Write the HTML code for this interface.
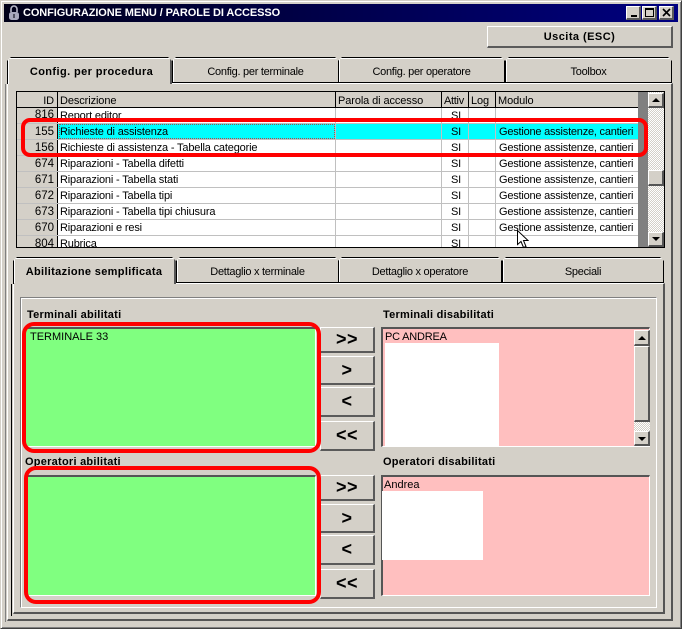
<!DOCTYPE html>
<html><head><meta charset="utf-8"><style>
html,body{margin:0;padding:0}
body{width:682px;height:629px;overflow:hidden;background:#d4d0c8;position:relative;font-family:"Liberation Sans",sans-serif;font-size:11px;color:#000}
div{position:absolute;box-sizing:border-box}
.btn{background:#d4d0c8;border-top:1px solid #fff;border-left:1px solid #fff;border-right:2px solid #5a5a5a;border-bottom:2px solid #5a5a5a}
.tab{background:#d4d0c8;border:1px solid #000;box-shadow:inset 1px 1px #fff;text-align:center;line-height:28px;height:26px;top:57px;letter-spacing:-.28px;clip-path:polygon(4px 0,calc(100% - 4px) 0,100% 4px,100% 100%,0 100%,0 4px)}
.sel{font-weight:bold;border-right:2px solid #555;border-bottom:0;z-index:3;height:27px;letter-spacing:.4px;padding-left:5px}
.t2{top:257px}
.t2.sel{letter-spacing:.33px;padding-left:0}
.r{left:0;height:16px;width:622px;overflow:hidden;line-height:16px;white-space:nowrap;border-bottom:1px solid #c0c0c0;background:#fff;letter-spacing:-.17px}
.r div{top:0;height:16px}
.id{left:0;width:41px;background:#d4d0c8;text-align:right;padding-right:3px;border-right:1px solid #000;border-bottom:1px solid #000;font-size:11.5px;letter-spacing:0}
.de{left:43px}
.si{left:434px;width:20px}
.mo{left:482px;letter-spacing:-.22px}
.h{top:0;height:16px;line-height:18px;background:#d4d0c8;border-right:1px solid #000;border-bottom:1px solid #000;padding-left:2px;overflow:hidden;letter-spacing:-.1px}
.b{font-weight:bold;letter-spacing:.25px}
.list{border-top:2px solid #555;border-left:2px solid #555;border-right:1px solid #fff;border-bottom:1px solid #fff}
.ar{font-weight:bold;text-align:center;font-size:18px;letter-spacing:.5px}
.sb{width:16px;background:#d4d0c8;border-top:1px solid #fff;border-left:1px solid #fff;border-right:2px solid #555;border-bottom:2px solid #555}
.up,.dn{left:3px;width:0;height:0;border-left:4px solid transparent;border-right:4px solid transparent}
.up{top:5px;border-bottom:4px solid #000}.dn{top:5px;border-top:4px solid #000}
.red{border:4px solid #f00;border-radius:12px;z-index:8}
.ck{background-color:#e8e6e2;background-image:repeating-conic-gradient(#d4d0c8 0 25%,#fff 0 50%);background-size:2px 2px}
</style></head><body>
<!-- outer frame -->
<div style="left:0;top:0;width:682px;height:629px;border:1px solid #d4d0c8;border-right:1px solid #404040;border-bottom:1px solid #404040;box-shadow:inset 1px 1px #fff,inset -1px -1px #808080"></div>
<!-- title -->
<div style="left:4px;top:4px;width:674px;height:18px;background:linear-gradient(90deg,#000018,#000080)"></div>
<svg style="position:absolute;left:8px;top:5px" width="12" height="16" viewBox="0 0 12 16"><path d="M3 7V4a3 3 0 0 1 6 0v3" fill="none" stroke="#b8b8c8" stroke-width="1.6"/><rect x="1" y="7" width="10" height="8" rx="2.5" fill="#a8a8bc"/><rect x="5" y="9" width="2" height="4" fill="#505060"/></svg>
<div style="left:23px;top:4px;height:18px;line-height:19px;color:#fff;font-weight:bold;font-size:11px;white-space:nowrap;letter-spacing:-.1px">CONFIGURAZIONE MENU / PAROLE DI ACCESSO</div>
<div class="btn" style="left:626px;top:6px;width:15px;height:14px"><div style="left:4px;top:8px;width:6px;height:2px;background:#000"></div></div>
<div class="btn" style="left:642px;top:6px;width:15px;height:14px"><div style="left:2px;top:1px;width:9px;height:9px;border:1px solid #000;border-top-width:2px"></div></div>
<div class="btn" style="left:659px;top:6px;width:15px;height:14px;margin:0"><svg style="position:absolute;left:2px;top:1px" width="9" height="9"><path d="M1 1L8 8M8 1L1 8" stroke="#000" stroke-width="1.6"/></svg></div>
<div class="btn b" style="left:487px;top:26px;width:186px;height:22px;text-align:center;line-height:20px;letter-spacing:.45px">Uscita (ESC)</div>

<!-- upper tabs -->
<div class="tab sel" style="left:7px;width:165px">Config. per procedura</div>
<div class="tab" style="left:172px;width:167px">Config. per terminale</div>
<div class="tab" style="left:338px;width:167px">Config. per operatore</div>
<div class="tab" style="left:505px;width:167px">Toolbox</div>
<div style="left:7px;top:83px;width:666px;height:538px;border-top:1px solid #fff;border-left:1px solid #fff;border-right:2px solid #555;border-bottom:2px solid #555"></div>
<div style="left:5px;top:84px;width:1px;height:538px;background:#808080"></div>
<div style="left:8px;top:83px;width:162px;height:2px;background:#d4d0c8;z-index:2"></div>

<!-- grid -->
<div style="left:16px;top:91px;width:649px;height:157px;border:1px solid #000;background:#fff;overflow:hidden">
 <div class="h" style="left:0;width:41px;text-align:right;padding-right:3px">ID</div>
 <div class="h" style="left:41px;width:278px">Descrizione</div>
 <div class="h" style="left:319px;width:106px">Parola di accesso</div>
 <div class="h" style="left:425px;width:27px;letter-spacing:-.3px">Attiv</div>
 <div class="h" style="left:452px;width:27px">Log</div>
 <div class="h" style="left:479px;width:143px">Modulo</div>
 <div class="r" style="top:16px;height:16px"><div class="id" style="top:-1px;height:17px">816</div><div class="de">Report editor</div><div class="si">SI</div></div>
 <div class="r" style="top:32px;background:#0ff"><div class="id" style="background:#d4d0c8">155</div><div class="de">Richieste di assistenza</div><div style="left:42px;top:0;width:276px;height:15px;border:1px dotted #a05050"></div><div class="si">SI</div><div class="mo">Gestione assistenze, cantieri</div></div>
 <div class="r" style="top:48px"><div class="id">156</div><div class="de">Richieste di assistenza - Tabella categorie</div><div class="si">SI</div><div class="mo">Gestione assistenze, cantieri</div></div>
 <div class="r" style="top:64px"><div class="id">674</div><div class="de">Riparazioni - Tabella difetti</div><div class="si">SI</div><div class="mo">Gestione assistenze, cantieri</div></div>
 <div class="r" style="top:80px"><div class="id">671</div><div class="de">Riparazioni - Tabella stati</div><div class="si">SI</div><div class="mo">Gestione assistenze, cantieri</div></div>
 <div class="r" style="top:96px"><div class="id">672</div><div class="de">Riparazioni - Tabella tipi</div><div class="si">SI</div><div class="mo">Gestione assistenze, cantieri</div></div>
 <div class="r" style="top:112px"><div class="id">673</div><div class="de">Riparazioni - Tabella tipi chiusura</div><div class="si">SI</div><div class="mo">Gestione assistenze, cantieri</div></div>
 <div class="r" style="top:128px"><div class="id">670</div><div class="de">Riparazioni e resi</div><div class="si">SI</div><div class="mo">Gestione assistenze, cantieri</div></div>
 <div class="r" style="top:144px;border-bottom:0"><div class="id" style="border-bottom:0">804</div><div class="de">Rubrica</div><div class="si">SI</div></div>
 <div style="left:318px;top:16px;width:1px;height:140px;background:#c0c0c0"></div>
 <div style="left:424px;top:16px;width:1px;height:140px;background:#c0c0c0"></div>
 <div style="left:451px;top:16px;width:1px;height:140px;background:#c0c0c0"></div>
 <div style="left:478px;top:16px;width:1px;height:140px;background:#c0c0c0"></div>
 <div style="left:621px;top:0;width:10px;height:156px;background:#808080"></div>
 <div class="ck" style="left:631px;top:0;width:16px;height:156px"></div>
 <div class="sb" style="left:631px;top:1px;height:15px"><div class="up" style="top:4px"></div></div>
 <div class="sb" style="left:631px;top:78px;height:16px"></div>
 <div class="sb" style="left:631px;top:140px;height:15px"><div class="dn" style="top:4px"></div></div>
</div>

<!-- lower tabs -->
<div class="tab sel t2" style="left:13px;width:163px">Abilitazione semplificata</div>
<div class="tab t2" style="left:176px;width:163px">Dettaglio x terminale</div>
<div class="tab t2" style="left:338px;width:164px">Dettaglio x operatore</div>
<div class="tab t2" style="left:502px;width:162px">Speciali</div>
<div style="left:13px;top:283px;width:652px;height:331px;border-top:1px solid #fff;border-left:1px solid #fff;border-right:2px solid #555;border-bottom:2px solid #555"></div>
<div style="left:11px;top:284px;width:1px;height:332px;background:#000"></div>
<div style="left:14px;top:283px;width:160px;height:2px;background:#d4d0c8;z-index:4"></div>
<div style="left:20px;top:297px;width:637px;height:311px;border-top:1px solid #808080;border-left:1px solid #808080;border-right:1px solid #fff;border-bottom:1px solid #fff;box-shadow:inset 1px 1px #fff"></div>

<div class="b" style="left:27px;top:308px;line-height:14px;white-space:nowrap">Terminali abilitati</div>
<div class="b" style="left:383px;top:308px;line-height:14px;white-space:nowrap">Terminali disabilitati</div>
<div class="b" style="left:25px;top:455px;line-height:14px;white-space:nowrap">Operatori abilitati</div>
<div class="b" style="left:383px;top:455px;line-height:14px;white-space:nowrap">Operatori disabilitati</div>

<div class="list" style="left:26px;top:327px;width:290px;height:120px;background:#80ff80;padding:1px 0 0 2px;line-height:15px;white-space:nowrap;border-left-color:#80ff80">TERMINALE 33</div>
<div class="list" style="left:26px;top:475px;width:290px;height:121px;background:#80ff80;border-left-color:#80ff80"></div>

<div class="list" style="left:381px;top:327px;width:269px;height:120px;background:#ffbfbf;padding:1px 0 0 2px;line-height:15px;white-space:nowrap;letter-spacing:-.2px">PC ANDREA
 <div style="left:2px;top:14px;width:114px;height:104px;background:#fff"></div>
 <div class="sb" style="left:251px;top:1px;height:16px"><div class="up"></div></div>
 <div class="sb" style="left:251px;top:17px;height:76px"></div>
 <div class="ck" style="left:251px;top:93px;width:16px;height:9px"></div>
 <div class="sb" style="left:251px;top:102px;height:15px"><div class="dn"></div></div>
</div>
<div class="list" style="left:381px;top:475px;width:269px;height:121px;background:#ffbfbf;padding:1px 0 0 1px;line-height:15px;white-space:nowrap">Andrea
 <div style="left:-1px;top:14px;width:101px;height:69px;background:#fff"></div>
</div>

<div class="btn ar" style="left:320px;top:327px;width:55px;height:26px;line-height:23px">&gt;&gt;</div>
<div class="btn ar" style="left:320px;top:356px;width:55px;height:29px;line-height:26px">&gt;</div>
<div class="btn ar" style="left:320px;top:387px;width:55px;height:30px;line-height:27px">&lt;</div>
<div class="btn ar" style="left:320px;top:421px;width:55px;height:30px;line-height:27px">&lt;&lt;</div>
<div class="btn ar" style="left:320px;top:475px;width:55px;height:26px;line-height:23px">&gt;&gt;</div>
<div class="btn ar" style="left:320px;top:504px;width:55px;height:29px;line-height:26px">&gt;</div>
<div class="btn ar" style="left:320px;top:535px;width:55px;height:30px;line-height:27px">&lt;</div>
<div class="btn ar" style="left:320px;top:569px;width:55px;height:30px;line-height:27px">&lt;&lt;</div>

<!-- annotations -->
<div class="red" style="left:21px;top:118px;width:627px;height:39px;border-radius:9px"></div>
<div class="red" style="left:22px;top:322px;width:299px;height:131px"></div>
<div class="red" style="left:24px;top:466px;width:297px;height:138px"></div>
<svg style="position:absolute;left:516px;top:229px;z-index:9" width="13" height="20" viewBox="0 0 13 20"><path d="M1.5 1.5V15.5L5 12.5L7.5 18.5L10 17.5L7.5 11.5H12Z" fill="#fff" stroke="#000" stroke-width="1"/></svg>
</body></html>
